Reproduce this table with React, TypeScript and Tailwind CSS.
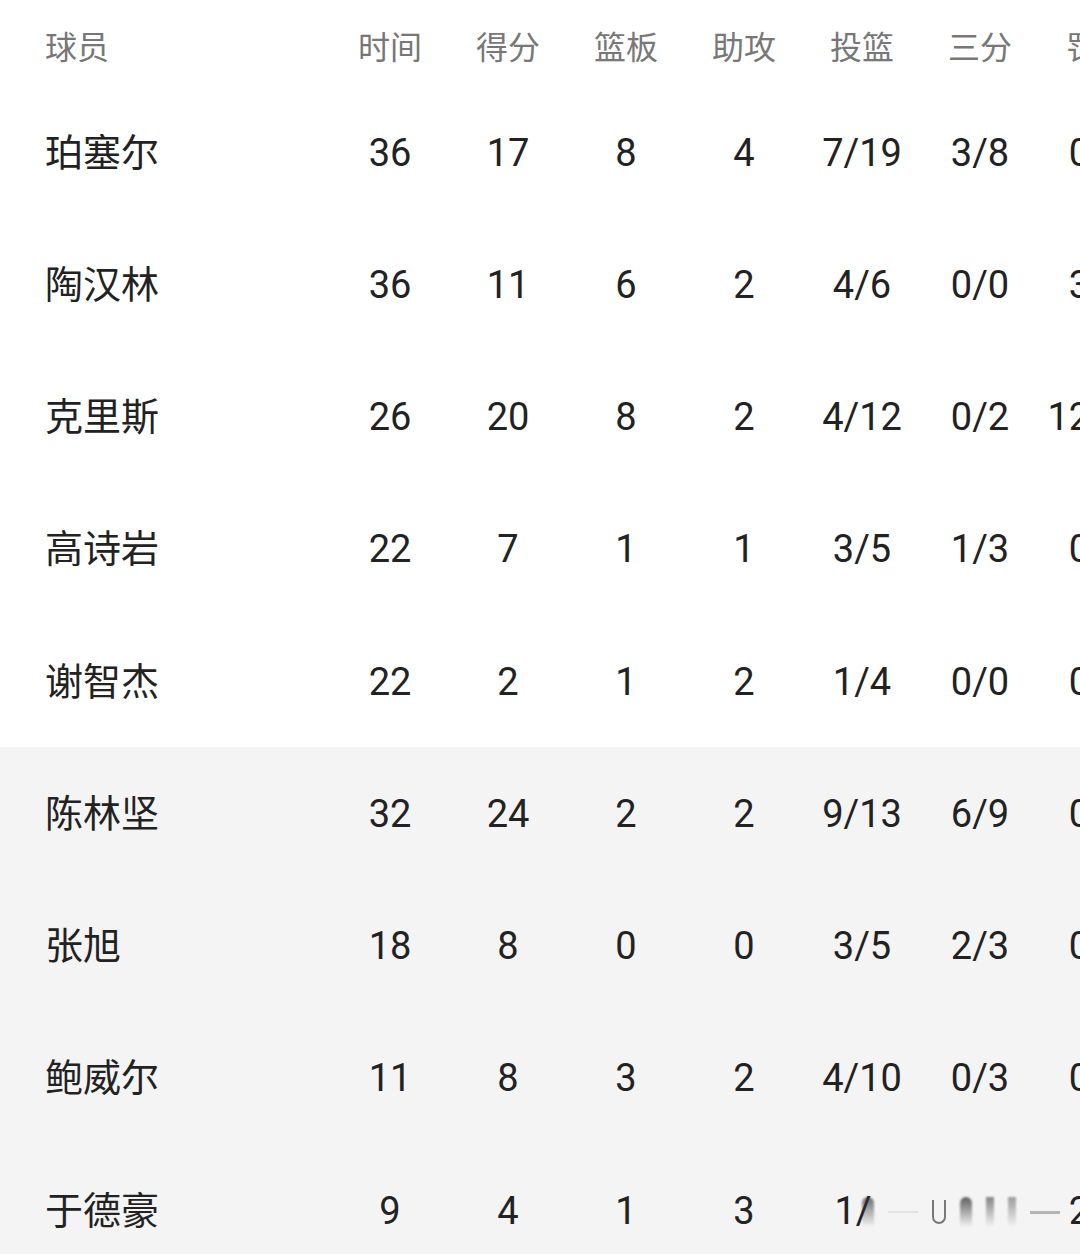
import React from "react";

const cols = ["时间", "得分", "篮板", "助攻", "投篮", "三分", "罚球"];

const rows: { name: string; v: string[]; bench?: boolean }[] = [
  { name: "珀塞尔", v: ["36", "17", "8", "4", "7/19", "3/8", "0/0"] },
  { name: "陶汉林", v: ["36", "11", "6", "2", "4/6", "0/0", "3/4"] },
  { name: "克里斯", v: ["26", "20", "8", "2", "4/12", "0/2", "12/14"] },
  { name: "高诗岩", v: ["22", "7", "1", "1", "3/5", "1/3", "0/0"] },
  { name: "谢智杰", v: ["22", "2", "1", "2", "1/4", "0/0", "0/0"] },
  { name: "陈林坚", v: ["32", "24", "2", "2", "9/13", "6/9", "0/0"], bench: true },
  { name: "张旭", v: ["18", "8", "0", "0", "3/5", "2/3", "0/0"], bench: true },
  { name: "鲍威尔", v: ["11", "8", "3", "2", "4/10", "0/3", "0/0"], bench: true },
  { name: "于德豪", v: ["9", "4", "1", "3", "1/4", "1/3", "2/2"], bench: true },
];

const font = { fontFamily: "Roboto, 'Noto Sans CJK SC', 'Noto Sans', sans-serif" };

export default function App() {
  return (
    <div className="w-[1080px] h-[1254px] overflow-hidden bg-white" style={font}>
      {/* header */}
      <div className="flex h-[86px] items-center pt-[9px] text-[32px] text-[#777777] whitespace-nowrap">
        <div className="w-[331px] shrink-0 pl-[45px]">球员</div>
        {cols.map((c) => (
          <div key={c} className="w-[118px] shrink-0 text-center">
            {c}
          </div>
        ))}
      </div>
      {/* rows */}
      {rows.map((r, i) => (
        <div
          key={r.name}
          className={`relative flex h-[132.25px] items-center pt-[2px] text-[38px] text-[#222222] whitespace-nowrap ${
            r.bench ? "bg-[#f4f4f4]" : "bg-white"
          }`}
        >
          <div className="w-[331px] shrink-0 pl-[45px]">{r.name}</div>
          {r.v.map((x, j) => (
            <div key={j} className="w-[118px] shrink-0 text-center">
              {i === 8 && (j === 4 || j === 5) ? (j === 4 ? <span className="pr-[18px]">1/</span> : "") : x}
            </div>
          ))}
          {i === 8 && (
            <div className="absolute left-[862px] top-[52px] flex h-[32px] w-[200px] items-center gap-[14px] opacity-70">
              <div className="h-[30px] w-[12px] rounded-t-full bg-gradient-to-b from-[#333] to-transparent blur-[1px]" />
              <div className="h-[2px] w-[30px] bg-[#ddd]" />
              <div className="h-[24px] w-[14px] rounded-b-full border-2 border-t-0 border-[#444]" />
              <div className="h-[30px] w-[12px] rounded-t-full bg-gradient-to-b from-[#222] to-transparent blur-[1px]" />
              <div className="h-[30px] w-[8px] bg-gradient-to-b from-[#555] to-transparent blur-[1px]" />
              <div className="h-[30px] w-[8px] bg-gradient-to-b from-[#777] to-transparent blur-[1px]" />
              <div className="h-[3px] w-[30px] bg-[#999]" />
            </div>
          )}
        </div>
      ))}
    </div>
  );
}
